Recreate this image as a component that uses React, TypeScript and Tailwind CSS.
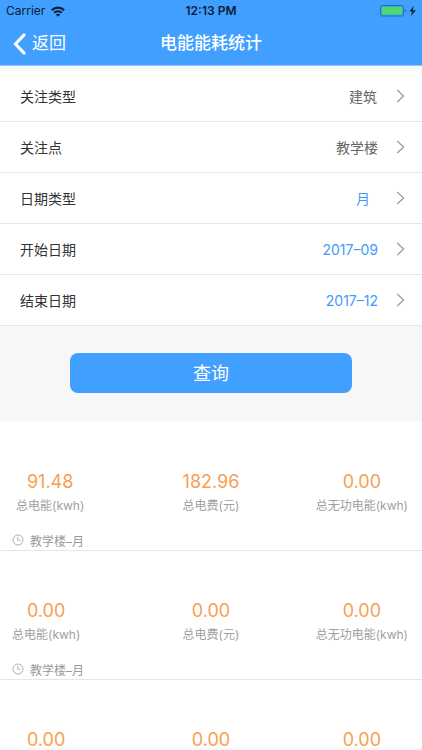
import React from "react";

type Field = { label: string; value: string; tone: string };
type Stat = { value: string; label: string };
type Entry = { id: number; place: string; inset: string; stats: [Stat, Stat, Stat] };

const fields: Field[] = [
  { label: "关注类型", value: "建筑", tone: "text-[#666666] pr-px" },
  { label: "关注点", value: "教学楼", tone: "text-[#666666]" },
  { label: "日期类型", value: "月", tone: "text-[#3f9cf5] pr-2" },
  { label: "开始日期", value: "2017–09", tone: "text-[#3f9cf5]" },
  { label: "结束日期", value: "2017–12", tone: "text-[#3f9cf5]" },
];

const makeStats = (energy: string, cost: string, reactive: string): [Stat, Stat, Stat] => [
  { value: energy, label: "总电能(kwh)" },
  { value: cost, label: "总电费(元)" },
  { value: reactive, label: "总无功电能(kwh)" },
];

const entries: Entry[] = [
  { id: 1, place: "教学楼–月", inset: "pl-4", stats: makeStats("91.48", "182.96", "0.00") },
  { id: 2, place: "教学楼–月", inset: "pl-3", stats: makeStats("0.00", "0.00", "0.00") },
  { id: 3, place: "教学楼–月", inset: "pl-3", stats: makeStats("0.00", "0.00", "0.00") },
];

function StatusBar() {
  return (
    <div className="grid h-[22px] grid-cols-3 items-center px-[6px] text-[12px] leading-[22px] text-[#0b2038]">
      <div className="flex items-center gap-[6px]">
        <span>Carrier</span>
        <svg width="14" height="11" viewBox="0 0 14 11" fill="none" stroke="currentColor" strokeWidth="2.2">
          <path d="M0.8 4.2C4.4 0.8 9.6 0.8 13.2 4.2" />
          <path d="M3.2 6.8C5.4 4.8 8.6 4.8 10.8 6.8" />
          <path d="M7 10.8 4.8 8.6C6 7.5 8 7.5 9.2 8.6Z" fill="currentColor" stroke="none" />
        </svg>
      </div>
      <div className="text-center font-semibold">12:13 PM</div>
      <div className="flex items-center justify-end">
        <svg width="36" height="12" viewBox="0 0 36 12">
          <rect x="0.5" y="0.5" width="23" height="10.5" rx="2" fill="none" stroke="#1f6fb8" />
          <rect x="2" y="2" width="20" height="7.5" rx="1" fill="#4cd964" />
          <path d="M25 4v3.5c1.6-.6 1.6-2.9 0-3.5Z" fill="#1f6fb8" />
          <path d="M33.8 0.8 29.4 6.4h2.8L31 11l4.8-5.8h-3Z" fill="#0b2038" />
        </svg>
      </div>
    </div>
  );
}

function FieldRow({ label, value, tone }: Field) {
  return (
    <button
      type="button"
      className="flex h-[51px] w-full items-center border-b border-[#e6e6e6] bg-white pr-[17px] pl-5 text-left text-[14px]"
    >
      <span className="flex-1 text-[#333333]">{label}</span>
      <span className={tone}>{value}</span>
      <svg className="ml-[18px]" width="9" height="14" viewBox="0 0 9 14" fill="none" stroke="#999999" strokeWidth="1.2">
        <path d="M1.2 1 7.6 7 1.2 13" />
      </svg>
    </button>
  );
}

function StatBlock({ value, label }: Stat) {
  return (
    <div className="flex flex-col items-center">
      <span className="text-[18px] leading-6 text-[#f7a050]">{value}</span>
      <span className="text-[12px] leading-6 whitespace-nowrap text-[#a0a0a0]">{label}</span>
    </div>
  );
}

function EntryCard({ place, inset, stats }: Entry) {
  return (
    <article className="border-b border-[#e6e6e6] pt-12">
      <div className="grid grid-cols-[1fr_auto_1fr]">
        <div className={`justify-self-start ${inset}`}>
          <StatBlock {...stats[0]} />
        </div>
        <StatBlock {...stats[1]} />
        <div className="justify-self-end pr-[14px]">
          <StatBlock {...stats[2]} />
        </div>
      </div>
      <div className="mt-4 flex items-center gap-[6px] pl-3 text-[12px] leading-4 text-[#999999]">
        <svg className="-mt-1" width="12" height="12" viewBox="0 0 12 12" fill="none" stroke="#a6a6a6" strokeWidth="0.9">
          <circle cx="6" cy="6" r="5" />
          <path d="M5.8 3v3.2h2.7" />
        </svg>
        <span>{place}</span>
      </div>
    </article>
  );
}

export default function App() {
  return (
    <div className="flex h-screen flex-col overflow-hidden bg-[#f7f7f7] font-['Inter','Noto_Sans_CJK_SC',sans-serif]">
      <header className="shrink-0 border-b border-[#8cc4fb] bg-[#409fff]">
        <StatusBar />
        <div className="grid h-[43px] grid-cols-[1fr_auto_1fr] items-center text-white">
          <button type="button" className="flex items-center gap-[6px] justify-self-start pl-[13px] text-[17px]">
            <svg width="13" height="22" viewBox="0 0 13 22" fill="none" stroke="currentColor" strokeWidth="3.2" strokeLinecap="round">
              <path d="M11 2 2.5 11 11 20" />
            </svg>
            <span>返回</span>
          </button>
          <h1 className="text-[17px] font-medium">电能能耗统计</h1>
        </div>
      </header>

      <main className="flex min-h-0 flex-1 flex-col pt-[5px]">
        <section className="shrink-0">
          {fields.map((field) => (
            <FieldRow key={field.label} {...field} />
          ))}
        </section>

        <div className="flex shrink-0 justify-center pt-[27px] pb-7">
          <button type="button" className="h-10 w-2/3 rounded-lg bg-[#409fff] text-[18px] text-white">
            查询
          </button>
        </div>

        <section className="mb-[2px] min-h-0 flex-1 overflow-y-auto bg-white pt-px [scrollbar-width:none]">
          {entries.map((entry) => (
            <EntryCard key={entry.id} {...entry} />
          ))}
        </section>
      </main>
    </div>
  );
}
